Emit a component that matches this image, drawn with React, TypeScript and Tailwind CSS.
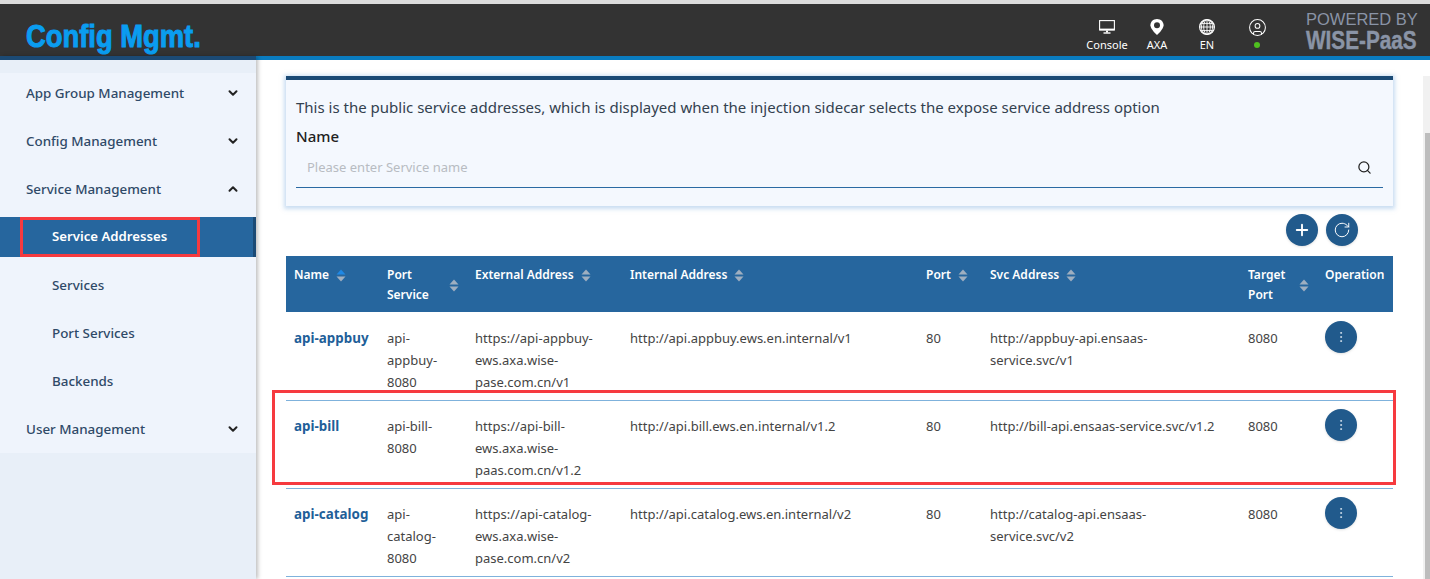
import React from 'react';
import { ChevronDown, ChevronUp, EllipsisVertical, Plus, RotateCw, Search, CircleUser } from 'lucide-react';

const rows = [
  { name: 'api-appbuy', port: ['api-', 'appbuy-', '8080'], ext: ['https://api-appbuy-', 'ews.axa.wise-', 'pase.com.cn/v1'], internal: 'http://api.appbuy.ews.en.internal/v1', svc: ['http://appbuy-api.ensaas-', 'service.svc/v1'] },
  { name: 'api-bill', port: ['api-bill-', '8080'], ext: ['https://api-bill-', 'ews.axa.wise-', 'paas.com.cn/v1.2'], internal: 'http://api.bill.ews.en.internal/v1.2', svc: ['http://bill-api.ensaas-service.svc/v1.2'] },
  { name: 'api-catalog', port: ['api-', 'catalog-', '8080'], ext: ['https://api-catalog-', 'ews.axa.wise-', 'pase.com.cn/v2'], internal: 'http://api.catalog.ews.en.internal/v2', svc: ['http://catalog-api.ensaas-', 'service.svc/v2'] },
];

const SortIcon = ({ active }: { active?: boolean }) => (
  <svg width="10" height="13" viewBox="0 0 10 13" className="shrink-0">
    <path d="M5 0.5 L9.5 5.5 H0.5 Z" fill={active ? '#1e88e5' : '#9fafc0'} />
    <path d="M5 12.5 L9.5 7.5 H0.5 Z" fill="#9fafc0" />
  </svg>
);

const MonitorIcon = () => (
  <svg width="16" height="14" viewBox="0 0 16 14" fill="none" stroke="white">
    <rect x="0.6" y="0.6" width="14.8" height="9.3" strokeWidth="1.1" />
    <path d="M0.5 9.5H15.5" strokeWidth="1.8" />
    <path d="M8 10.5V12.6" strokeWidth="2" />
    <path d="M4.5 13H11.5" strokeWidth="1.4" />
  </svg>
);

const PinIcon = () => (
  <svg width="14" height="16" viewBox="0 0 14 16">
    <path d="M7 0C3.1 0 0.4 2.9 0.4 6.3 0.4 10.4 7 16 7 16s6.6-5.6 6.6-9.7C13.6 2.9 10.9 0 7 0z" fill="white" />
    <circle cx="7" cy="6.2" r="3" fill="#333333" />
  </svg>
);

const GlobeIcon = () => (
  <svg width="16" height="16" viewBox="0 0 16 16" fill="none" stroke="white" strokeWidth="0.9">
    <circle cx="8" cy="8" r="7.4" strokeWidth="1.2" />
    <ellipse cx="8" cy="8" rx="3.3" ry="7.4" />
    <ellipse cx="8" cy="8" rx="5.6" ry="7.4" />
    <path d="M8 0.6V15.4M0.6 8H15.4M1.6 4.4H14.4M1.6 11.6H14.4" />
  </svg>
);

const NavItem = ({ label, open }: { label: string; open?: boolean }) => (
  <div className="mt-2 h-10 flex items-center justify-between pl-[26px] pr-[16px] text-[13.4px] font-medium text-[#2f4a68]">
    <span>{label}</span>
    {open ? <ChevronUp className="w-3.5 h-3.5 text-[#222]" strokeWidth={3.4} /> : <ChevronDown className="w-3.5 h-3.5 text-[#222]" strokeWidth={3.4} />}
  </div>
);

const SubItem = ({ label, active }: { label: string; active?: boolean }) => (
  <div className={`mt-2 h-10 flex items-center pl-[52px] ${active ? 'bg-[#26669e] text-[13.2px] text-white font-semibold border-r-[3px] border-[#1b4a75]' : 'text-[13.4px] font-medium text-[#2f4a68]'}`}>
    {label}
  </div>
);

const HeadCell = ({ label, active, wrapped, noSort }: { label: React.ReactNode; active?: boolean; wrapped?: boolean; noSort?: boolean }) => (
  <th className="px-2 pt-[9px] align-top text-left text-[12px] leading-5 font-semibold text-white">
    <div className={wrapped ? 'flex items-center justify-between' : 'flex items-start gap-[7px]'}>
      <span>{label}</span>
      {noSort ? null : <span className={wrapped ? '' : 'mt-[4px]'}><SortIcon active={active} /></span>}
    </div>
  </th>
);

const HeaderAction = ({ icon, label }: { icon: React.ReactNode; label: React.ReactNode }) => (
  <div className="w-[50px] flex flex-col items-center text-[11px] leading-4 text-white">
    <div className="h-5 flex items-center">{icon}</div>
    <div className="h-4 flex items-center">{label}</div>
  </div>
);

const RoundButton = ({ children }: { children: React.ReactNode }) => (
  <button className="w-8 h-8 rounded-full bg-[#215a8c] text-white flex items-center justify-center shadow-sm">{children}</button>
);

export default function App() {
  return (
    <div className="relative h-[579px] w-[1430px] overflow-hidden bg-white flex flex-col font-['Noto_Sans','Open_Sans',sans-serif]">
      <div className="h-1 shrink-0 bg-[#dcdcdc]" />
      <header className="h-[52px] shrink-0 bg-[#333333] flex items-center justify-between">
        <div className="ml-[26px] mt-[11px] text-[32px] leading-9 font-bold whitespace-nowrap text-[#0a9df0] scale-x-[0.855] origin-left [-webkit-text-stroke:1px_#0a9df0] font-['Liberation_Sans',sans-serif]">Config Mgmt.</div>
        <div className="flex items-center mr-[13px]">
          <div className="flex mt-[10px]">
            <HeaderAction icon={<MonitorIcon />} label="Console" />
            <HeaderAction icon={<PinIcon />} label="AXA" />
            <HeaderAction icon={<GlobeIcon />} label="EN" />
            <HeaderAction icon={<CircleUser className="w-[19px] h-[19px]" strokeWidth={1.3} />} label={<span className="w-[6px] h-[6px] rounded-full bg-[#4fc01f]" />} />
          </div>
          <div className="ml-[24px] w-[111px] text-[#8a94a6] mt-[2px] font-['Liberation_Sans',sans-serif]">
            <div className="text-[16.5px] leading-[18px] whitespace-nowrap">POWERED BY</div>
            <div className="text-[25px] leading-[24px] font-bold whitespace-nowrap scale-x-[0.83] origin-left [-webkit-text-stroke:0.4px_#8a94a6]">WISE-PaaS</div>
          </div>
        </div>
      </header>
      <div className="flex-1 flex min-h-0">
        <aside className="w-[256px] shrink-0 bg-[#e8eff8] shadow-[2px_0_4px_rgba(0,0,0,0.25)] z-10">
          <div className="h-1 bg-[#1b4a75]" />
          <div className="h-[5px] bg-[#e8eff8]" />
          <div className="bg-[#eff4fc] pb-1">
            <NavItem label="App Group Management" />
            <NavItem label="Config Management" />
            <NavItem label="Service Management" open />
            <SubItem label="Service Addresses" active />
            <SubItem label="Services" />
            <SubItem label="Port Services" />
            <SubItem label="Backends" />
            <NavItem label="User Management" />
          </div>
        </aside>
        <main className="flex-1 min-w-0">
          <div className="h-1 bg-[#0a7cc0]" />
          <div className="pl-[30px] pr-[37px] pt-[16px]">
            <section className="h-[130px] bg-[#f4f8fe] border-t-4 border-[#1b4a75] shadow-[0_1px_4px_2px_rgba(150,190,230,0.5)] px-[10px] pt-[17px]">
              <p className="text-[15px] leading-5 text-[#33414f] whitespace-nowrap">This is the public service addresses, which is displayed when the injection sidecar selects the expose service address option</p>
              <div className="mt-[9px] text-[15px] leading-5 font-medium text-[#222]">Name</div>
              <div className="mt-[2px] h-[40px] border-b border-[#2a6aa3] flex items-center justify-between pl-[11px] pr-[11px]">
                <span className="text-[13px] text-[#b8bcc2]">Please enter Service name</span>
                <Search className="w-[15px] h-[15px] text-[#222]" strokeWidth={2} />
              </div>
            </section>
            <div className="mt-[8px] h-[32px] flex justify-end gap-2 pr-[35px]">
              <RoundButton><Plus className="w-[18px] h-[18px]" strokeWidth={2.5} /></RoundButton>
              <RoundButton><RotateCw className="w-[18px] h-[18px]" strokeWidth={1.3} /></RoundButton>
            </div>
            <table className="mt-[10px] w-[1107px] table-fixed border-collapse">
              <colgroup>
                <col className="w-[93px]" /><col className="w-[88px]" /><col className="w-[155px]" /><col className="w-[296px]" /><col className="w-[64px]" /><col className="w-[258px]" /><col className="w-[77px]" /><col className="w-[76px]" />
              </colgroup>
              <thead>
                <tr className="h-[56px] bg-[#26669e]">
                  <HeadCell label="Name" active />
                  <HeadCell label={<>Port<br />Service</>} wrapped />
                  <HeadCell label="External Address" />
                  <HeadCell label="Internal Address" />
                  <HeadCell label="Port" />
                  <HeadCell label="Svc Address" />
                  <HeadCell label={<>Target<br />Port</>} wrapped />
                  <HeadCell label="Operation" noSort />
                </tr>
              </thead>
              <tbody>
                {rows.map((row, i) => {
                  const pad = i === 0 ? 'px-2 pt-[15px]' : 'px-2 pt-[14px]';
                  return (
                    <tr key={row.name} className="h-[88px] border-b border-[#7fb2dc] align-top text-[13px] leading-[22px] text-[#444]">
                      <td className={`${pad} text-[13.4px] font-bold text-[#1f5f99]`}>{row.name}</td>
                      <td className={pad}>{row.port.map((l) => <div key={l}>{l}</div>)}</td>
                      <td className={`${pad} whitespace-nowrap`}>{row.ext.map((l) => <div key={l}>{l}</div>)}</td>
                      <td className={`${pad} whitespace-nowrap`}>{row.internal}</td>
                      <td className={pad}>80</td>
                      <td className={`${pad} whitespace-nowrap`}>{row.svc.map((l) => <div key={l}>{l}</div>)}</td>
                      <td className={pad}>8080</td>
                      <td className={i === 0 ? 'px-2 pt-[9px]' : 'px-2 pt-[8px]'}>
                        <RoundButton><EllipsisVertical className="w-[14px] h-[14px] text-[#dbe6f0]" strokeWidth={1.4} /></RoundButton>
                      </td>
                    </tr>
                  );
                })}
              </tbody>
            </table>
          </div>
        </main>
      </div>

      {/* scrollbar */}
      <div className="absolute right-0 top-[76px] bottom-0 w-[7px] bg-[#f1f1f1] z-10 pl-[2px]">
        <div className="mt-[57px] w-full h-full bg-[#bdbdbd]" />
      </div>

      {/* red annotation boxes */}
      <div className="absolute left-[20px] top-[217px] w-[180px] h-[40px] border-[3px] border-[#f63a3f] z-20" />
      <div className="absolute left-[272px] top-[390px] w-[1124px] h-[95px] border-[3px] border-[#f63a3f] z-20" />
    </div>
  );
}
